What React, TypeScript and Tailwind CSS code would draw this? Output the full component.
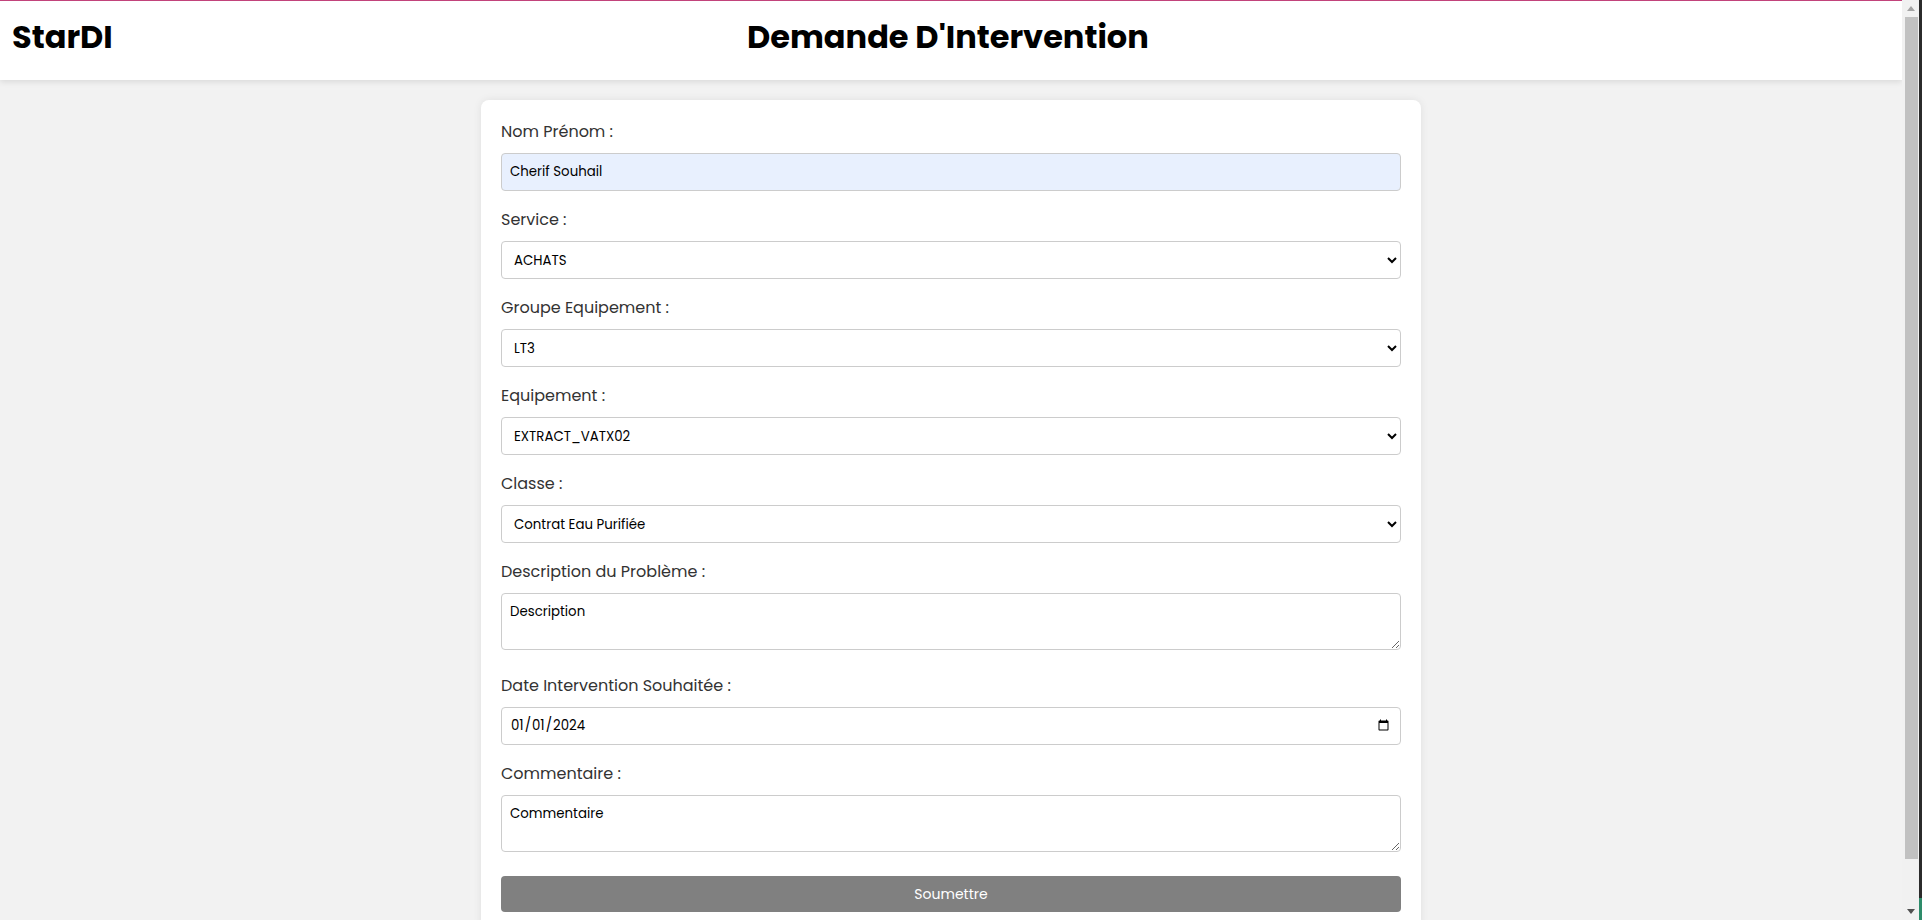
import React from 'react';

const services = ['ACHATS', 'MAINTENANCE', 'PRODUCTION', 'QUALITE', 'LOGISTIQUE'];
const groupes = ['LT3', 'LT1', 'LT2', 'LT4'];
const equipements = ['EXTRACT_VATX02', 'EXTRACT_VATX01', 'EXTRACT_VATX03'];
const classes = ['Contrat Eau Purifiée', 'Electrique', 'Mécanique', 'Utilités'];

const labelCls = "block text-[16px] leading-6 text-[#333] mb-[9px]";
const fieldCls =
  "block w-full h-[38px] rounded border border-[#ccc] px-2 text-[13.33px] text-black outline-none";
const areaCls =
  "block w-full h-[57px] rounded border border-[#ccc] bg-white px-2 py-2 text-[13.33px] text-black outline-none";

const Field: React.FC<{ label: string; children: React.ReactNode; last?: boolean }> = ({
  label,
  children,
  last,
}) => (
  <div className={last ? "mb-6" : "mb-[17px]"}>
    <label className={labelCls}>{label}</label>
    {children}
  </div>
);

const Select: React.FC<{ options: string[]; value: string }> = ({ options, value }) => (
  <select className={fieldCls + " bg-white"} defaultValue={value}>
    {options.map((s) => (
      <option key={s}>{s}</option>
    ))}
  </select>
);

const Scrollbar = () => (
  <div className="w-[17px] h-screen bg-[#f1f1f1] flex flex-col items-center">
    <div className="h-[17px] flex items-center justify-center">
      <svg width="8" height="5" viewBox="0 0 8 5">
        <path d="M0 5 L4 0 L8 5 Z" fill="#a3a3a3" />
      </svg>
    </div>
    <div className="w-[13px] flex-1 bg-[#c1c1c1] mb-[44px] ml-[1px]" />
    <div className="h-[17px] flex items-center justify-center">
      <svg width="8" height="5" viewBox="0 0 8 5">
        <path d="M0 0 L8 0 L4 5 Z" fill="#505050" />
      </svg>
    </div>
  </div>
);

export default function App() {
  return (
    <div className="h-screen overflow-hidden flex font-['Poppins','DejaVu_Sans',sans-serif]">
      <div className="flex-1 h-screen overflow-hidden bg-[#f2f2f2]">
        <header className="h-[80px] pb-[8px] border-t border-[#c2437b] bg-white shadow-[0_2px_6px_rgba(0,0,0,0.1)] flex items-center">
          <div className="pl-3 text-[32px] font-bold text-black">StarDI</div>
          <h1 className="flex-1 text-center text-[32px] font-bold text-black">Demande D'Intervention</h1>
          <div className="w-[119px]" />
        </header>

        <main className="flex justify-center pt-5 pb-5">
          <form
            className="w-[940px] rounded-lg bg-white p-5 shadow-[0_0_8px_rgba(0,0,0,0.08)]"
            onSubmit={(e) => e.preventDefault()}
          >
            <Field label="Nom Prénom :">
              <input className={fieldCls + " bg-[#e8f0fe]"} defaultValue="Cherif Souhail" />
            </Field>

            <Field label="Service :">
              <Select options={services} value="ACHATS" />
            </Field>

            <Field label="Groupe Equipement :">
              <Select options={groupes} value="LT3" />
            </Field>

            <Field label="Equipement :">
              <Select options={equipements} value="EXTRACT_VATX02" />
            </Field>

            <Field label="Classe :">
              <Select options={classes} value="Contrat Eau Purifiée" />
            </Field>

            <Field label="Description du Problème :" last>
              <textarea className={areaCls} defaultValue="Description" />
            </Field>

            <Field label="Date Intervention Souhaitée :">
              <input type="date" className={fieldCls + " bg-white"} defaultValue="2024-01-01" />
            </Field>

            <Field label="Commentaire :" last>
              <textarea className={areaCls} defaultValue="Commentaire" />
            </Field>

            <button
              type="submit"
              className="block w-full h-[36px] rounded bg-[#808080] text-[14px] text-white"
            >
              Soumettre
            </button>
          </form>
        </main>
      </div>
      <Scrollbar />
      <div className="w-[3px] h-screen bg-[#2b2b2b] flex flex-col justify-end">
        <div className="h-[22px] bg-[#2e8b6a]" />
      </div>
    </div>
  );
}
